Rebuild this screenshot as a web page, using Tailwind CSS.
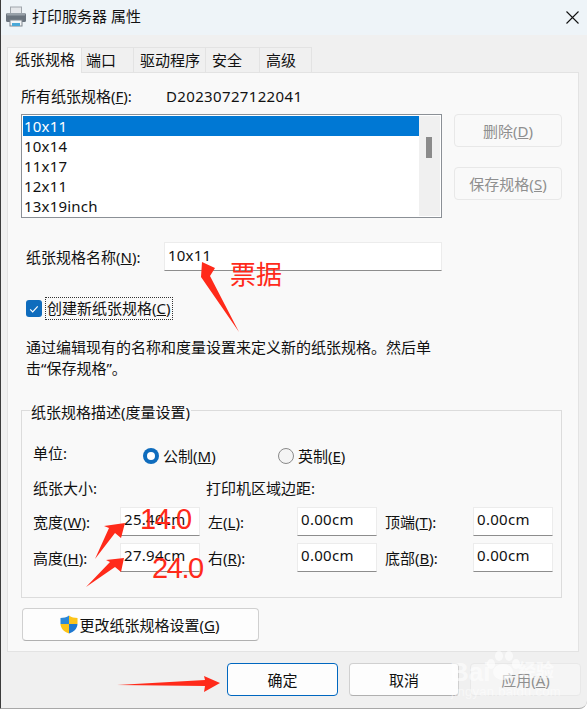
<!DOCTYPE html>
<html lang="zh-CN">
<head>
<meta charset="utf-8">
<script src="https://cdn.jsdelivr.net/npm/@tailwindcss/browser@4"></script>
</head>
<body class="m-0 bg-white">
<div class="relative w-[587px] h-[709px] overflow-hidden flex flex-col bg-[#f0f0f0] border-l border-b border-l-[#3c3c3c] border-b-[#a8a8a8] rounded-br-[8px] text-[15px] leading-[20px] text-[#111] font-['Noto_Sans','Noto_Sans_CJK_SC',sans-serif]">
  <!-- title bar -->
  <header class="h-[35px] shrink-0 bg-[#eef4f8] flex items-center pl-[4px] pr-[8px] pb-[3px]">
    <svg class="w-[22px] h-[22px] mt-[1px]" viewBox="0 0 22 22">
      <rect x="5.500" y="1" width="11" height="7" fill="#e4e7ea" stroke="#a0a6ac"/>
      <rect x="1" y="7" width="20" height="9" rx="1.500" fill="#6a747e"/>
      <rect x="2" y="7" width="18" height="2.500" fill="#97a0a8"/>
      <rect x="5" y="14" width="12" height="6" fill="#f4f6f8" stroke="#7e868e"/>
      <rect x="7" y="17" width="8" height="3" fill="#49a8d8"/>
    </svg>
    <span class="ml-[5px] text-[15px]">打印服务器 属性</span>
    <svg class="ml-auto w-[13px] h-[13px] mt-[3px]" viewBox="0 0 13 13"><path d="M.5.500l12 12M12.500.500l-12 12" stroke="#111" stroke-width="1.100" fill="none"/></svg>
  </header>

  <!-- tabs -->
  <nav class="mt-[11px] ml-[6px] h-[26px] flex items-end text-[15px]">
    <div class="w-[75px] h-[26px] bg-[#f9f9f9] border border-b-0 border-[#e3e3e3] pl-[7px] leading-[22px] relative z-10 -mb-px">纸张规格</div>
    <div class="w-[52px] h-[25px] border-r border-t border-[#e3e3e3] pl-[4px] leading-[24px]">端口</div>
    <div class="w-[72px] h-[25px] border-r border-t border-[#e3e3e3] pl-[6px] leading-[24px]">驱动程序</div>
    <div class="w-[54px] h-[25px] border-r border-t border-[#e3e3e3] pl-[6px] leading-[24px]">安全</div>
    <div class="w-[52px] h-[25px] border-r border-t border-[#e3e3e3] pl-[6px] leading-[24px]">高级</div>
  </nav>

  <!-- panel -->
  <main class="ml-[6px] w-[572px] h-[580px] bg-[#f9f9f9] border border-[#e3e3e3] pt-[13px] flex flex-col">
    <div class="ml-[13px] flex h-[20px]">
      <span class="w-[145px]">所有纸张规格(<span class="underline">F</span>):</span>
      <span class="tracking-[0.35px]">D20230727122041</span>
    </div>
    <div class="mt-[8px] ml-[13px] flex items-start">
      <div class="w-[421px] h-[104px] border border-[#8b9096] p-px flex bg-white">
        <ul class="flex-1">
          <li class="h-[20px] pl-[1px] bg-[#0078d4] text-white tracking-[0.2px]">10x11</li>
          <li class="h-[20px] pl-[1px] tracking-[0.2px]">10x14</li>
          <li class="h-[20px] pl-[1px] tracking-[0.2px]">11x17</li>
          <li class="h-[20px] pl-[1px] tracking-[0.2px]">12x11</li>
          <li class="h-[20px] pl-[1px] tracking-[0.2px]">13x19inch</li>
        </ul>
        <div class="w-[21px] bg-[#f0f0f0] pt-[21px] pl-[7px]"><div class="w-[6px] h-[21px] bg-[#8b8b8b]"></div></div>
      </div>
      <div class="ml-[12px] w-[108px] flex flex-col gap-[20px] text-[#8f8f8f]">
        <div class="h-[33px] border border-[#e8e8e8] rounded-[4px] flex items-center justify-center">删除(<span class="underline">D</span>)</div>
        <div class="h-[33px] border border-[#e8e8e8] rounded-[4px] flex items-center justify-center">保存规格(<span class="underline">S</span>)</div>
      </div>
    </div>

    <div class="mt-[24px] ml-[18px] flex items-center h-[29px]">
      <span class="w-[138px]">纸张规格名称(<span class="underline">N</span>):</span>
      <div class="w-[278px] h-[29px] bg-white border border-[#ececec] border-b-[#8d8d8d] pl-[3px] leading-[24px] tracking-[0.2px]">10x11</div>
    </div>

    <div class="mt-[26px] ml-[18px] flex items-center h-[23px]">
      <span class="w-[16px] h-[17px] rounded-[3px] bg-[#0f6cbd] flex items-center justify-center">
        <svg class="w-[10px] h-[10px]" viewBox="0 0 10 10"><path d="M1.200 5.300l2.500 2.500 5-5.400" stroke="#fff" stroke-width="1.200" fill="none"/></svg>
      </span>
      <span class="ml-[3px] h-[23px] px-px border border-dotted border-[#333] leading-[20px]">创建新纸张规格(<span class="underline">C</span>)</span>
    </div>

    <p class="mt-[17px] ml-[18px] w-[410px] leading-[21px]">通过编辑现有的名称和度量设置来定义新的纸张规格。然后单击“保存规格”。</p>

    <fieldset class="mt-[31px] ml-[13px] w-[541px] h-[188px] border border-[#dcdcdc] relative">
      <legend class="absolute -top-[9px] left-[8px] bg-[#f9f9f9] px-px">纸张规格描述(度量设置)</legend>
      <div class="pl-[11px] pt-[32px] flex h-[55px]">
        <span class="w-[110px]">单位:</span>
        <label class="w-[135px] flex items-center h-[20px] mt-[3px]">
          <span class="w-[16px] h-[16px] rounded-full bg-[#0f6cbd] flex items-center justify-center"><span class="w-[8px] h-[8px] rounded-full bg-white"></span></span>
          <span class="ml-[4px]">公制(<span class="underline">M</span>)</span>
        </label>
        <label class="flex items-center h-[20px] mt-[3px]">
          <span class="w-[16px] h-[16px] rounded-full border border-[#8a8a8a] bg-[#f4f4f4]"></span>
          <span class="ml-[4px]">英制(<span class="underline">E</span>)</span>
        </label>
      </div>
      <div class="pl-[11px] pt-[12px] flex h-[32px]">
        <span class="w-[173px]">纸张大小:</span><span>打印机区域边距:</span>
      </div>
      <div class="ml-[11px] mt-[9px] grid grid-cols-[87px_80px_8px_89px_80px_8px_88px_80px] grid-rows-[29px_29px] gap-y-[7px] items-center">
        <span>宽度(<span class="underline">W</span>):</span>
        <div class="h-[29px] bg-white border border-[#ececec] border-b-[#8d8d8d] pl-[3px] leading-[23px] tracking-[0.3px]">25.40cm</div>
        <span></span>
        <span>左(<span class="underline">L</span>):</span>
        <div class="h-[29px] bg-white border border-[#ececec] border-b-[#8d8d8d] pl-[3px] leading-[23px] tracking-[0.3px]">0.00cm</div>
        <span></span>
        <span>顶端(<span class="underline">T</span>):</span>
        <div class="h-[29px] bg-white border border-[#ececec] border-b-[#8d8d8d] pl-[3px] leading-[23px] tracking-[0.3px]">0.00cm</div>
        <span>高度(<span class="underline">H</span>):</span>
        <div class="h-[29px] bg-white border border-[#ececec] border-b-[#8d8d8d] pl-[3px] leading-[23px] tracking-[0.3px]">27.94cm</div>
        <span></span>
        <span>右(<span class="underline">R</span>):</span>
        <div class="h-[29px] bg-white border border-[#ececec] border-b-[#8d8d8d] pl-[3px] leading-[23px] tracking-[0.3px]">0.00cm</div>
        <span></span>
        <span>底部(<span class="underline">B</span>):</span>
        <div class="h-[29px] bg-white border border-[#ececec] border-b-[#8d8d8d] pl-[3px] leading-[23px] tracking-[0.3px]">0.00cm</div>
      </div>
    </fieldset>

    <div class="mt-[10px] ml-[14px] w-[237px] h-[33px] bg-[#fdfdfd] border border-[#d0d0d0] border-b-[#b0b0b0] rounded-[4px] flex items-center justify-center">
      <svg class="w-[18px] h-[19px] mr-[2px]" viewBox="0 0 18 19">
        <path d="M9 .500C6.500 2.300 3.500 3 .500 3v6H9z" fill="#2b88d8"/>
        <path d="M9 .500c2.500 1.800 5.500 2.500 8.500 2.500v6H9z" fill="#fcc419"/>
        <path d="M.500 9H9v9.500C4 16.800.900 14 .500 9z" fill="#fcc419"/>
        <path d="M17.500 9H9v9.500c5-1.700 8.100-4.500 8.500-9.500z" fill="#1f78d0"/>
      </svg>
      <span class="mr-[2px]">更改纸张规格设置(<span class="underline">G</span>)</span>
    </div>
  </main>

  <!-- footer -->
  <footer class="mt-[11px] ml-[226px] flex gap-[11px]">
    <div class="w-[111px] h-[33px] bg-[#fdfdfd] border border-[#0067c0] rounded-[4px] flex items-center justify-center">确定</div>
    <div class="w-[110px] h-[33px] bg-[#fdfdfd] border border-[#d0d0d0] border-b-[#b0b0b0] rounded-[4px] flex items-center justify-center">取消</div>
    <div class="w-[111px] h-[33px] bg-[#f5f5f5] border border-[#e8e8e8] rounded-[4px] flex items-center justify-center text-[#8f8f8f]">应用(<span class="underline">A</span>)</div>
  </footer>

  <!-- annotations drawn on top of the screenshot -->
  <svg class="absolute -left-px top-0 w-[587px] h-[709px] pointer-events-none" viewBox="0 0 587 709">
    <g fill="#ff2a1a">
      <path d="M202 262L215 268L210 276L239 332L201 277Z"/>
      <path d="M125 523L121 538L115 533L95 559L109 528L104 526Z"/>
      <path d="M124 558L121 572L115 567L86 587L110 562L106 560Z"/>
      <path d="M220 683L204 692L205 686L117 685L205 680L204 676Z"/>
    </g>
  </svg>
  <span class="absolute left-[229px] top-[255px] text-[26px] leading-[36px] text-[#ff2a1a] font-['Noto_Sans_CJK_SC',sans-serif]">票据</span>
  <span class="absolute left-[139px] top-[501px] text-[29px] leading-[36px] tracking-[-1.4px] text-[#ff2a1a] font-['Liberation_Sans',sans-serif]">14.0</span>
  <span class="absolute left-[151px] top-[550px] text-[29px] leading-[36px] tracking-[-1.4px] text-[#ff2a1a] font-['Liberation_Sans',sans-serif]">24.0</span>
  <!-- watermark -->
  <svg class="absolute left-[484px] top-[651px] w-[36px] h-[30px] pointer-events-none" viewBox="0 0 36 30" fill="#fff" fill-opacity=".6"><ellipse cx="6" cy="13" rx="4" ry="5"/><ellipse cx="14" cy="5" rx="4" ry="5"/><ellipse cx="24" cy="5" rx="4" ry="5"/><ellipse cx="31" cy="13" rx="4" ry="5"/><ellipse cx="18" cy="21" rx="10" ry="8"/></svg>
  <span class="absolute left-[449px] top-[658px] text-[26px] leading-[28px] font-bold text-white/60 font-['Liberation_Sans',sans-serif]">Bai</span>
  <span class="absolute left-[517px] top-[657px] text-[18px] leading-[26px] font-bold text-white/60">经验</span>
  <span class="absolute left-[450px] top-[684px] text-[13px] leading-[16px] tracking-[0.3px] text-white/50 font-['Liberation_Sans',sans-serif]">jingyan.baidu.com</span>
</div>
</body>
</html>
